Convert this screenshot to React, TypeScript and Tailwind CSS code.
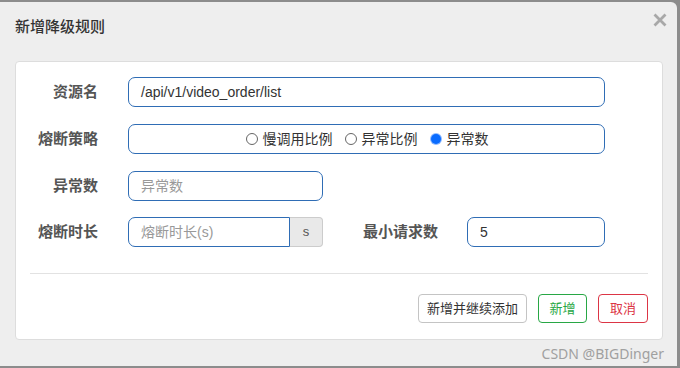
import React from "react";

const font = { fontFamily: '"Liberation Sans", "Noto Sans CJK SC", sans-serif' };

const Label = ({ children, width = "w-[82px]" }: { children: React.ReactNode; width?: string }) => (
  <div className={`${width} shrink-0 text-right text-[15px] font-semibold text-[#555]`}>{children}</div>
);

const Radio = ({ checked, label }: { checked?: boolean; label: string }) => (
  <label className="flex items-center gap-[5px] text-[14px] text-[#333]">
    {checked ? (
      <span className="flex h-[12px] w-[12px] items-center justify-center rounded-full bg-[#8fbaff]">
        <span className="h-[10px] w-[10px] rounded-full bg-[#0a6cff]" />
      </span>
    ) : (
      <span className="h-[12px] w-[12px] rounded-full border border-[#666] bg-white" />
    )}
    {label}
  </label>
);

export default function App() {
  return (
    <div className="h-[368px] w-[680px] overflow-hidden bg-[#8c8c8c] pb-[2px] pr-[3px] pt-[2px]" style={font}>
      <div className="flex h-full flex-col rounded-tr-[6px] bg-[#eeeeee]">
        {/* header */}
        <div className="flex h-[59px] items-start justify-between pl-[15px] pr-[10px]">
          <div className="pt-[15px] text-[15px] font-medium leading-[20px] text-[#333]">新增降级规则</div>
          <button className="mt-[11px] flex h-[14px] w-[14px] items-center justify-center">
            <svg width="14" height="14" viewBox="0 0 14 14">
              <path d="M1.5 1.5 L12.5 12.5 M12.5 1.5 L1.5 12.5" stroke="#a8a8a8" strokeWidth="2.8" strokeLinecap="butt" />
            </svg>
          </button>
        </div>

        {/* body card */}
        <div className="mx-[14px] ml-[15px] flex h-[279px] flex-col rounded-[4px] border border-[#dddddd] bg-white">
          <div className="flex flex-col gap-[17px] pt-[15px]">
            <div className="flex h-[30px] items-center">
              <Label>资源名</Label>
              <div className="ml-[30px] flex h-[30px] w-[477px] items-center rounded-[7px] border border-[#2f6db5] px-[12px] text-[14px] text-[#333]">
                /api/v1/video_order/list
              </div>
            </div>

            <div className="flex h-[30px] items-center">
              <Label>熔断策略</Label>
              <div className="ml-[30px] flex h-[30px] w-[477px] items-center justify-center gap-[12px] rounded-[7px] border border-[#2f6db5] pl-[1px]">
                <Radio label="慢调用比例" />
                <Radio label="异常比例" />
                <Radio checked label="异常数" />
              </div>
            </div>

            <div className="flex h-[30px] items-center">
              <Label>异常数</Label>
              <div className="ml-[30px] flex h-[30px] w-[195px] items-center rounded-[7px] border border-[#2f6db5] px-[12px] text-[14px] text-[#999]">
                异常数
              </div>
            </div>

            <div className="-mt-[1px] flex h-[30px] items-center">
              <Label>熔断时长</Label>
              <div className="ml-[30px] flex h-[30px] w-[195px]">
                <div className="flex h-full w-[162px] items-center rounded-l-[7px] border border-[#2f6db5] px-[12px] text-[14px] text-[#999]">
                  熔断时长(s)
                </div>
                <div className="flex h-full flex-1 items-center justify-center rounded-r-[4px] border border-l-0 border-[#cccccc] bg-[#e9e9e9] text-[13px] text-[#555]">
                  s
                </div>
              </div>
              <Label width="w-[115px]">最小请求数</Label>
              <div className="ml-[29px] flex h-[30px] w-[138px] items-center rounded-[7px] border border-[#2f6db5] px-[12px] text-[14px] text-[#333]">
                5
              </div>
            </div>
          </div>

          <div className="mx-[14px] mt-[26px] h-px bg-[#e2e2e2]" />

          <div className="mx-[14px] mt-[20px] flex justify-end gap-[11px]">
            <button className="h-[29px] w-[109px] rounded-[4px] border border-[#c4c4c4] bg-white text-[13px] text-[#333]">新增并继续添加</button>
            <button className="h-[29px] w-[49px] rounded-[4px] border border-[#28a745] bg-white text-[13px] text-[#28a745]">新增</button>
            <button className="h-[29px] w-[50px] rounded-[4px] border border-[#dc3545] bg-white text-[13px] text-[#dc3545]">取消</button>
          </div>
        </div>

        {/* watermark */}
        <div
          className="flex flex-1 items-center justify-end pr-[13px] text-[14px] text-[#a0a0a0]"
          style={{ fontFamily: '"Noto Sans", sans-serif' }}
        >
          CSDN @BIGDinger
        </div>
      </div>
    </div>
  );
}
